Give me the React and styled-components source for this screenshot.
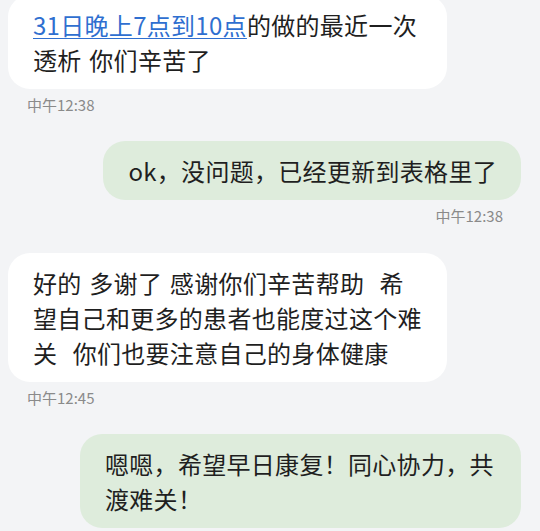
import React from 'react';
import styled, { createGlobalStyle } from 'styled-components';

const GlobalStyle = createGlobalStyle`
  html, body {
    margin: 0;
    padding: 0;
    background: #f3f4f6;
  }
  body {
    font-family: "Noto Sans CJK SC", "Noto Sans", sans-serif;
    overflow: hidden;
  }
`;

const Chat = styled.div`
  display: flex;
  flex-direction: column;
  width: 540px;
  height: 531px;
  overflow: hidden;
  background: #f3f4f6;
`;

const Message = styled.div`
  display: flex;
  flex-direction: column;
  align-items: ${p => (p.$mine ? 'flex-end' : 'flex-start')};
  margin-top: ${p => p.$offset}px;
  padding: ${p => (p.$mine ? '0 19px 0 0' : '0 0 0 8px')};
`;

const Bubble = styled.div`
  box-sizing: border-box;
  max-width: ${p => (p.$mine ? 441 : 439)}px;
  padding: 12px 24px 12px 25px;
  border-radius: 22px;
  background: ${p => (p.$mine ? '#deecdc' : '#ffffff')};
  color: #1f1f1f;
  font-size: 24px;
  line-height: 35px;
  letter-spacing: 0.3px;
  word-spacing: 2px;
  white-space: pre-wrap;
  word-break: break-all;
`;

const Link = styled.span`
  color: #2f6fd0;
  text-decoration: underline;
  text-underline-offset: 3px;
  text-decoration-thickness: 1px;
`;

const Time = styled.div`
  margin-top: 6px;
  padding: ${p => (p.$mine ? '0 18px 0 0' : '0 0 0 19px')};
  font-size: 15px;
  line-height: 20px;
  color: #8a8a8a;
`;

const messages = [
  {
    mine: false,
    offset: -5,
    text: (
      <>
        <Link>31日晚上7点到10点</Link>的做的最近一次透析 你们辛苦了
      </>
    ),
    time: '中午12:38',
  },
  {
    mine: true,
    offset: 26,
    text: 'ok，没问题，已经更新到表格里了',
    time: '中午12:38',
  },
  {
    mine: false,
    offset: 27,
    text: '好的 多谢了 感谢你们辛苦帮助  希望自己和更多的患者也能度过这个难关  你们也要注意自己的身体健康',
    time: '中午12:45',
  },
  {
    mine: true,
    offset: 26,
    text: '嗯嗯，希望早日康复！同心协力，共渡难关！',
  },
];

export default function App() {
  return (
    <>
      <GlobalStyle />
      <Chat>
        {messages.map((m, i) => (
          <Message key={i} $mine={m.mine} $offset={m.offset}>
            <Bubble $mine={m.mine}>{m.text}</Bubble>
            {m.time && <Time $mine={m.mine}>{m.time}</Time>}
          </Message>
        ))}
      </Chat>
    </>
  );
}
